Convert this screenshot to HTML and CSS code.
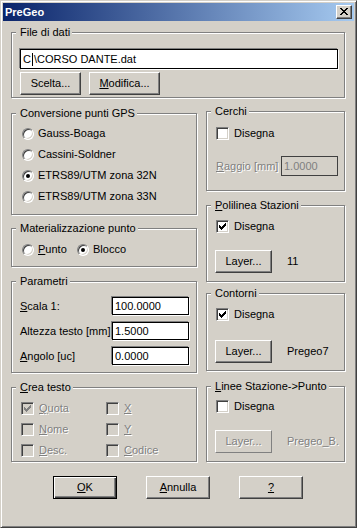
FILE: index.html
```html
<!DOCTYPE html>
<html>
<head>
  <meta charset="UTF-8">
  <title>PreGeo</title>
  <link rel="stylesheet" href="styles.css">
</head>
<body>
  <div class="window">
    <div class="titlebar">
      <span class="title">PreGeo</span>
      <span class="close-btn">
        <svg width="14" height="12" viewBox="0 0 14 12" shape-rendering="crispEdges">
          <path d="M3 2h2v1h1v1h2v-1h1v-1h2v1h-1v1h-1v1h-1v1h1v1h1v1h1v1h-2v-1h-1v-1h-2v1h-1v1h-2v-1h1v-1h1v-1h1v-1h-1v-1h-1v-1h-1z" fill="#000"/>
        </svg>
      </span>
    </div>

    <div class="dialog">
      <!-- File di dati -->
      <fieldset class="group group-file">
        <legend>File di dati</legend>
        <div class="group-body file-body">
          <div class="field field-path">C<span class="caret"></span>\CORSO DANTE.dat</div>
          <div class="btn-row">
            <span class="btn btn-scelta">Scelta...</span>
            <span class="btn btn-modifica"><u>M</u>odifica...</span>
          </div>
        </div>
      </fieldset>

      <div class="columns">
        <div class="col col-left">
          <fieldset class="group group-gps">
            <legend>Conversione punti GPS</legend>
            <div class="group-body gps-body">
              <div class="opt"><span class="radio"></span>Gauss-Boaga</div>
              <div class="opt"><span class="radio"></span>Cassini-Soldner</div>
              <div class="opt"><span class="radio on"></span>ETRS89/UTM zona 32N</div>
              <div class="opt"><span class="radio"></span>ETRS89/UTM zona 33N</div>
            </div>
          </fieldset>

          <fieldset class="group group-mat">
            <legend>Materializzazione punto</legend>
            <div class="group-body mat-body">
              <div class="opt opt-punto"><span class="radio"></span><span><u>P</u>unto</span></div>
              <div class="opt"><span class="radio on"></span>Blocco</div>
            </div>
          </fieldset>

          <fieldset class="group group-param">
            <legend>Parametri</legend>
            <div class="group-body param-body">
              <div class="param-row">
                <span class="param-label"><u>S</u>cala 1:</span>
                <div class="field field-small">100.0000</div>
              </div>
              <div class="param-row">
                <span class="param-label">Altezza testo [mm]</span>
                <div class="field field-small">1.5000</div>
              </div>
              <div class="param-row">
                <span class="param-label"><u>A</u>ngolo [uc]</span>
                <div class="field field-small">0.0000</div>
              </div>
            </div>
          </fieldset>

          <fieldset class="group group-testo">
            <legend><u>C</u>rea testo</legend>
            <div class="group-body testo-body">
              <div class="opt disabled"><span class="check"><svg viewBox="0 0 11 11" shape-rendering="crispEdges"><path d="M2 4h1v1h1v1h1v-1h1v-1h1v-1h1v-1h1v3h-1v1h-1v1h-1v1h-1v1h-1v-1h-1v-1h-1z"/></svg></span><span class="txt"><u>Q</u>uota</span></div>
              <div class="opt disabled"><span class="check"></span><span class="txt"><u>X</u></span></div>
              <div class="opt disabled"><span class="check"></span><span class="txt"><u>N</u>ome</span></div>
              <div class="opt disabled"><span class="check"></span><span class="txt"><u>Y</u></span></div>
              <div class="opt disabled"><span class="check"></span><span class="txt"><u>D</u>esc.</span></div>
              <div class="opt disabled"><span class="check"></span><span class="txt"><u>C</u>odice</span></div>
            </div>
          </fieldset>
        </div>

        <div class="col col-right">
          <fieldset class="group group-cerchi">
            <legend>Cerchi</legend>
            <div class="group-body cerchi-body">
              <div class="opt"><span class="check"></span>Disegna</div>
              <div class="raggio-row">
                <span class="raggio-label disabled-text"><u>R</u>aggio [mm]</span>
                <div class="field field-disabled">1.0000</div>
              </div>
            </div>
          </fieldset>

          <fieldset class="group group-poli">
            <legend><u>P</u>olilinea Stazioni</legend>
            <div class="group-body poli-body">
              <div class="opt"><span class="check"><svg viewBox="0 0 11 11" shape-rendering="crispEdges"><path d="M2 4h1v1h1v1h1v-1h1v-1h1v-1h1v-1h1v3h-1v1h-1v1h-1v1h-1v1h-1v-1h-1v-1h-1z"/></svg></span>Disegna</div>
              <div class="layer-row">
                <span class="btn btn-layer">Layer...</span>
                <span class="layer-name">11</span>
              </div>
            </div>
          </fieldset>

          <fieldset class="group group-contorni">
            <legend>Contorni</legend>
            <div class="group-body contorni-body">
              <div class="opt"><span class="check"><svg viewBox="0 0 11 11" shape-rendering="crispEdges"><path d="M2 4h1v1h1v1h1v-1h1v-1h1v-1h1v-1h1v3h-1v1h-1v1h-1v1h-1v1h-1v-1h-1v-1h-1z"/></svg></span>Disegna</div>
              <div class="layer-row layer-row-wide">
                <span class="btn btn-layer">Layer...</span>
                <span class="layer-name">Pregeo7</span>
              </div>
            </div>
          </fieldset>

          <fieldset class="group group-linee">
            <legend><u>L</u>inee Stazione-&gt;Punto</legend>
            <div class="group-body linee-body">
              <div class="opt"><span class="check"></span>Disegna</div>
              <div class="layer-row">
                <span class="btn btn-layer btn-disabled"><span class="disabled-text">Layer...</span></span>
                <span class="layer-name disabled-text">Pregeo_B.</span>
              </div>
            </div>
          </fieldset>
        </div>
      </div>

      <div class="actions">
        <span class="btn btn-action btn-default"><u>O</u>K</span>
        <span class="btn btn-action"><u>A</u>nnulla</span>
        <span class="btn btn-action"><u>?</u></span>
      </div>
    </div>
  </div>
</body>
</html>
```

FILE: styles.css
```css
/* Classic dialog look */
* {
  margin: 0;
  padding: 0;
  box-sizing: border-box;
}

:root {
  --face: #d4d0c8;
  --shadow: #808080;
  --dark: #404040;
  --light: #ffffff;
}

body {
  background-color: var(--face);
  color: #000;
  font-family: "Liberation Sans", Arial, sans-serif;
  font-size: 11px;
  line-height: 13px;
}

u {
  text-decoration: underline;
  text-underline-offset: 1px;
}

/* Window frame */
.window {
  width: 357px;
  height: 528px;
  padding: 2px;
  border: 1px solid;
  border-color: var(--face) var(--dark) var(--dark) var(--face);
  box-shadow: inset 1px 1px var(--light), inset -1px -1px var(--shadow);
}

.titlebar {
  height: 18px;
  display: flex;
  align-items: center;
  justify-content: space-between;
  padding: 0 2px;
  background: linear-gradient(to right, #0a246a, #a6caf0);
}

.title {
  color: #fff;
  font-weight: bold;
  font-size: 11px;
}

.close-btn {
  width: 16px;
  height: 14px;
  display: flex;
  align-items: center;
  justify-content: center;
  background-color: var(--face);
  border: 1px solid;
  border-color: var(--light) var(--dark) var(--dark) var(--light);
  box-shadow: inset -1px -1px var(--shadow);
}

.close-btn svg {
  display: block;
}

.dialog {
  padding: 5px 9px 0 8px;
}

/* Group boxes */
.group {
  border: 1px solid var(--shadow);
  box-shadow: inset 1px 1px var(--light), 1px 1px 0 var(--light);
  min-inline-size: 0;
}

.group legend {
  margin-left: 4px;
  padding: 0 2px 0 4px;
  line-height: 13px;
  background-color: var(--face);
}

.group-body {
  padding-left: 9px;
}

.group-file { height: 72px; }
.file-body { padding: 10px 0 0 8px; }

.field {
  height: 20px;
  display: flex;
  align-items: center;
  padding: 0 2px;
  background-color: #fff;
  border: 1px solid #000;
  box-shadow: -1px -1px 0 var(--shadow), 1px 1px 0 var(--light);
  white-space: nowrap;
}

.field-path {
  width: 318px;
}

.caret {
  display: inline-block;
  width: 1px;
  height: 13px;
  margin: 0 1px;
  background-color: #000;
}

.btn-row {
  display: flex;
  gap: 8px;
  margin-top: 3px;
}

/* Buttons */
.btn {
  height: 23px;
  display: flex;
  align-items: center;
  justify-content: center;
  background-color: var(--face);
  border: 1px solid;
  border-color: var(--light) var(--dark) var(--dark) var(--light);
  box-shadow: inset -1px -1px var(--shadow);
  white-space: nowrap;
}

.btn-scelta { width: 61px; }
.btn-modifica { width: 71px; }

.btn-default {
  border-color: #000;
  box-shadow: inset 1px 1px var(--light), inset -1px -1px var(--dark), inset -2px -2px var(--shadow);
}

.btn-disabled {
  border-color: var(--light) var(--shadow) var(--shadow) var(--light);
  box-shadow: none;
}

/* Columns */
.columns {
  display: flex;
  gap: 9px;
}

.col {
  display: flex;
  flex-direction: column;
}

.col-left { width: 186px; }
.col-right { width: 139px; }

.group-gps { height: 108px; margin-top: 9px; }
.group-mat { height: 45px; margin-top: 7px; }
.group-param { height: 98px; margin-top: 8px; }
.group-testo { height: 81px; margin-top: 8px; }

.group-cerchi { height: 86px; margin-top: 7px; }
.group-poli { height: 83px; margin-top: 8px; }
.group-contorni { height: 84px; margin-top: 5px; }
.group-linee { height: 82px; margin-top: 9px; }

/* Options */
.opt {
  height: 21px;
  display: flex;
  align-items: center;
  gap: 4px;
  white-space: nowrap;
}

.radio {
  width: 12px;
  height: 12px;
  flex: none;
  display: flex;
  align-items: center;
  justify-content: center;
  border-radius: 50%;
  background-color: #fff;
  border: 1px solid;
  border-color: var(--shadow) var(--light) var(--light) var(--shadow);
  box-shadow: inset 1px 1px var(--dark), inset -1px -1px var(--face);
}

.radio.on::after {
  content: "";
  width: 4px;
  height: 4px;
  border-radius: 50%;
  background-color: #000;
}

.check {
  width: 13px;
  height: 13px;
  flex: none;
  margin-right: 1px;
  background-color: #fff;
  border: 1px solid;
  border-color: var(--shadow) var(--light) var(--light) var(--shadow);
  box-shadow: inset 1px 1px var(--dark), inset -1px -1px var(--face);
}

.check svg {
  display: block;
  width: 11px;
  height: 11px;
  fill: #000;
}

.disabled .check {
  background-color: var(--face);
}

.disabled .check svg {
  fill: var(--shadow);
}

.disabled .txt,
.disabled-text {
  color: var(--shadow);
  text-shadow: 1px 1px 0 var(--light);
}

.gps-body { padding: 3px 0 0 10px; }

.mat-body {
  display: flex;
  padding: 4px 0 0 10px;
}

.opt-punto { width: 55px; }

/* Parametri */
.param-body { padding: 9px 0 0 8px; }

.param-row {
  display: flex;
  align-items: center;
  margin-bottom: 7px;
}

.param-label {
  width: 92px;
  white-space: nowrap;
}

.field-small {
  width: 77px;
  height: 18px;
}

/* Crea testo */
.testo-body {
  display: grid;
  grid-template-columns: 85px auto;
  padding: 4px 0 0 9px;
}

/* Right column */
.cerchi-body { padding: 5px 0 0 9px; }

.raggio-row {
  display: flex;
  align-items: center;
  margin-top: 12px;
}

.raggio-label {
  width: 65px;
  white-space: nowrap;
}

.field-disabled {
  width: 57px;
  background-color: var(--face);
  border-color: var(--dark);
  box-shadow: none;
  color: var(--shadow);
}

.poli-body { padding: 4px 0 0 9px; }
.contorni-body { padding: 4px 0 0 9px; }
.linee-body { padding: 3px 0 0 9px; }

.layer-row {
  display: flex;
  align-items: center;
  gap: 15px;
  margin-top: 13px;
  margin-left: -1px;
}

.layer-row-wide { margin-top: 15px; }

.btn-layer { width: 57px; }

.layer-name {
  white-space: nowrap;
}

/* Bottom buttons */
.actions {
  display: flex;
  justify-content: center;
  gap: 29px;
  margin-top: 14px;
}

.btn-action { width: 64px; }
```
